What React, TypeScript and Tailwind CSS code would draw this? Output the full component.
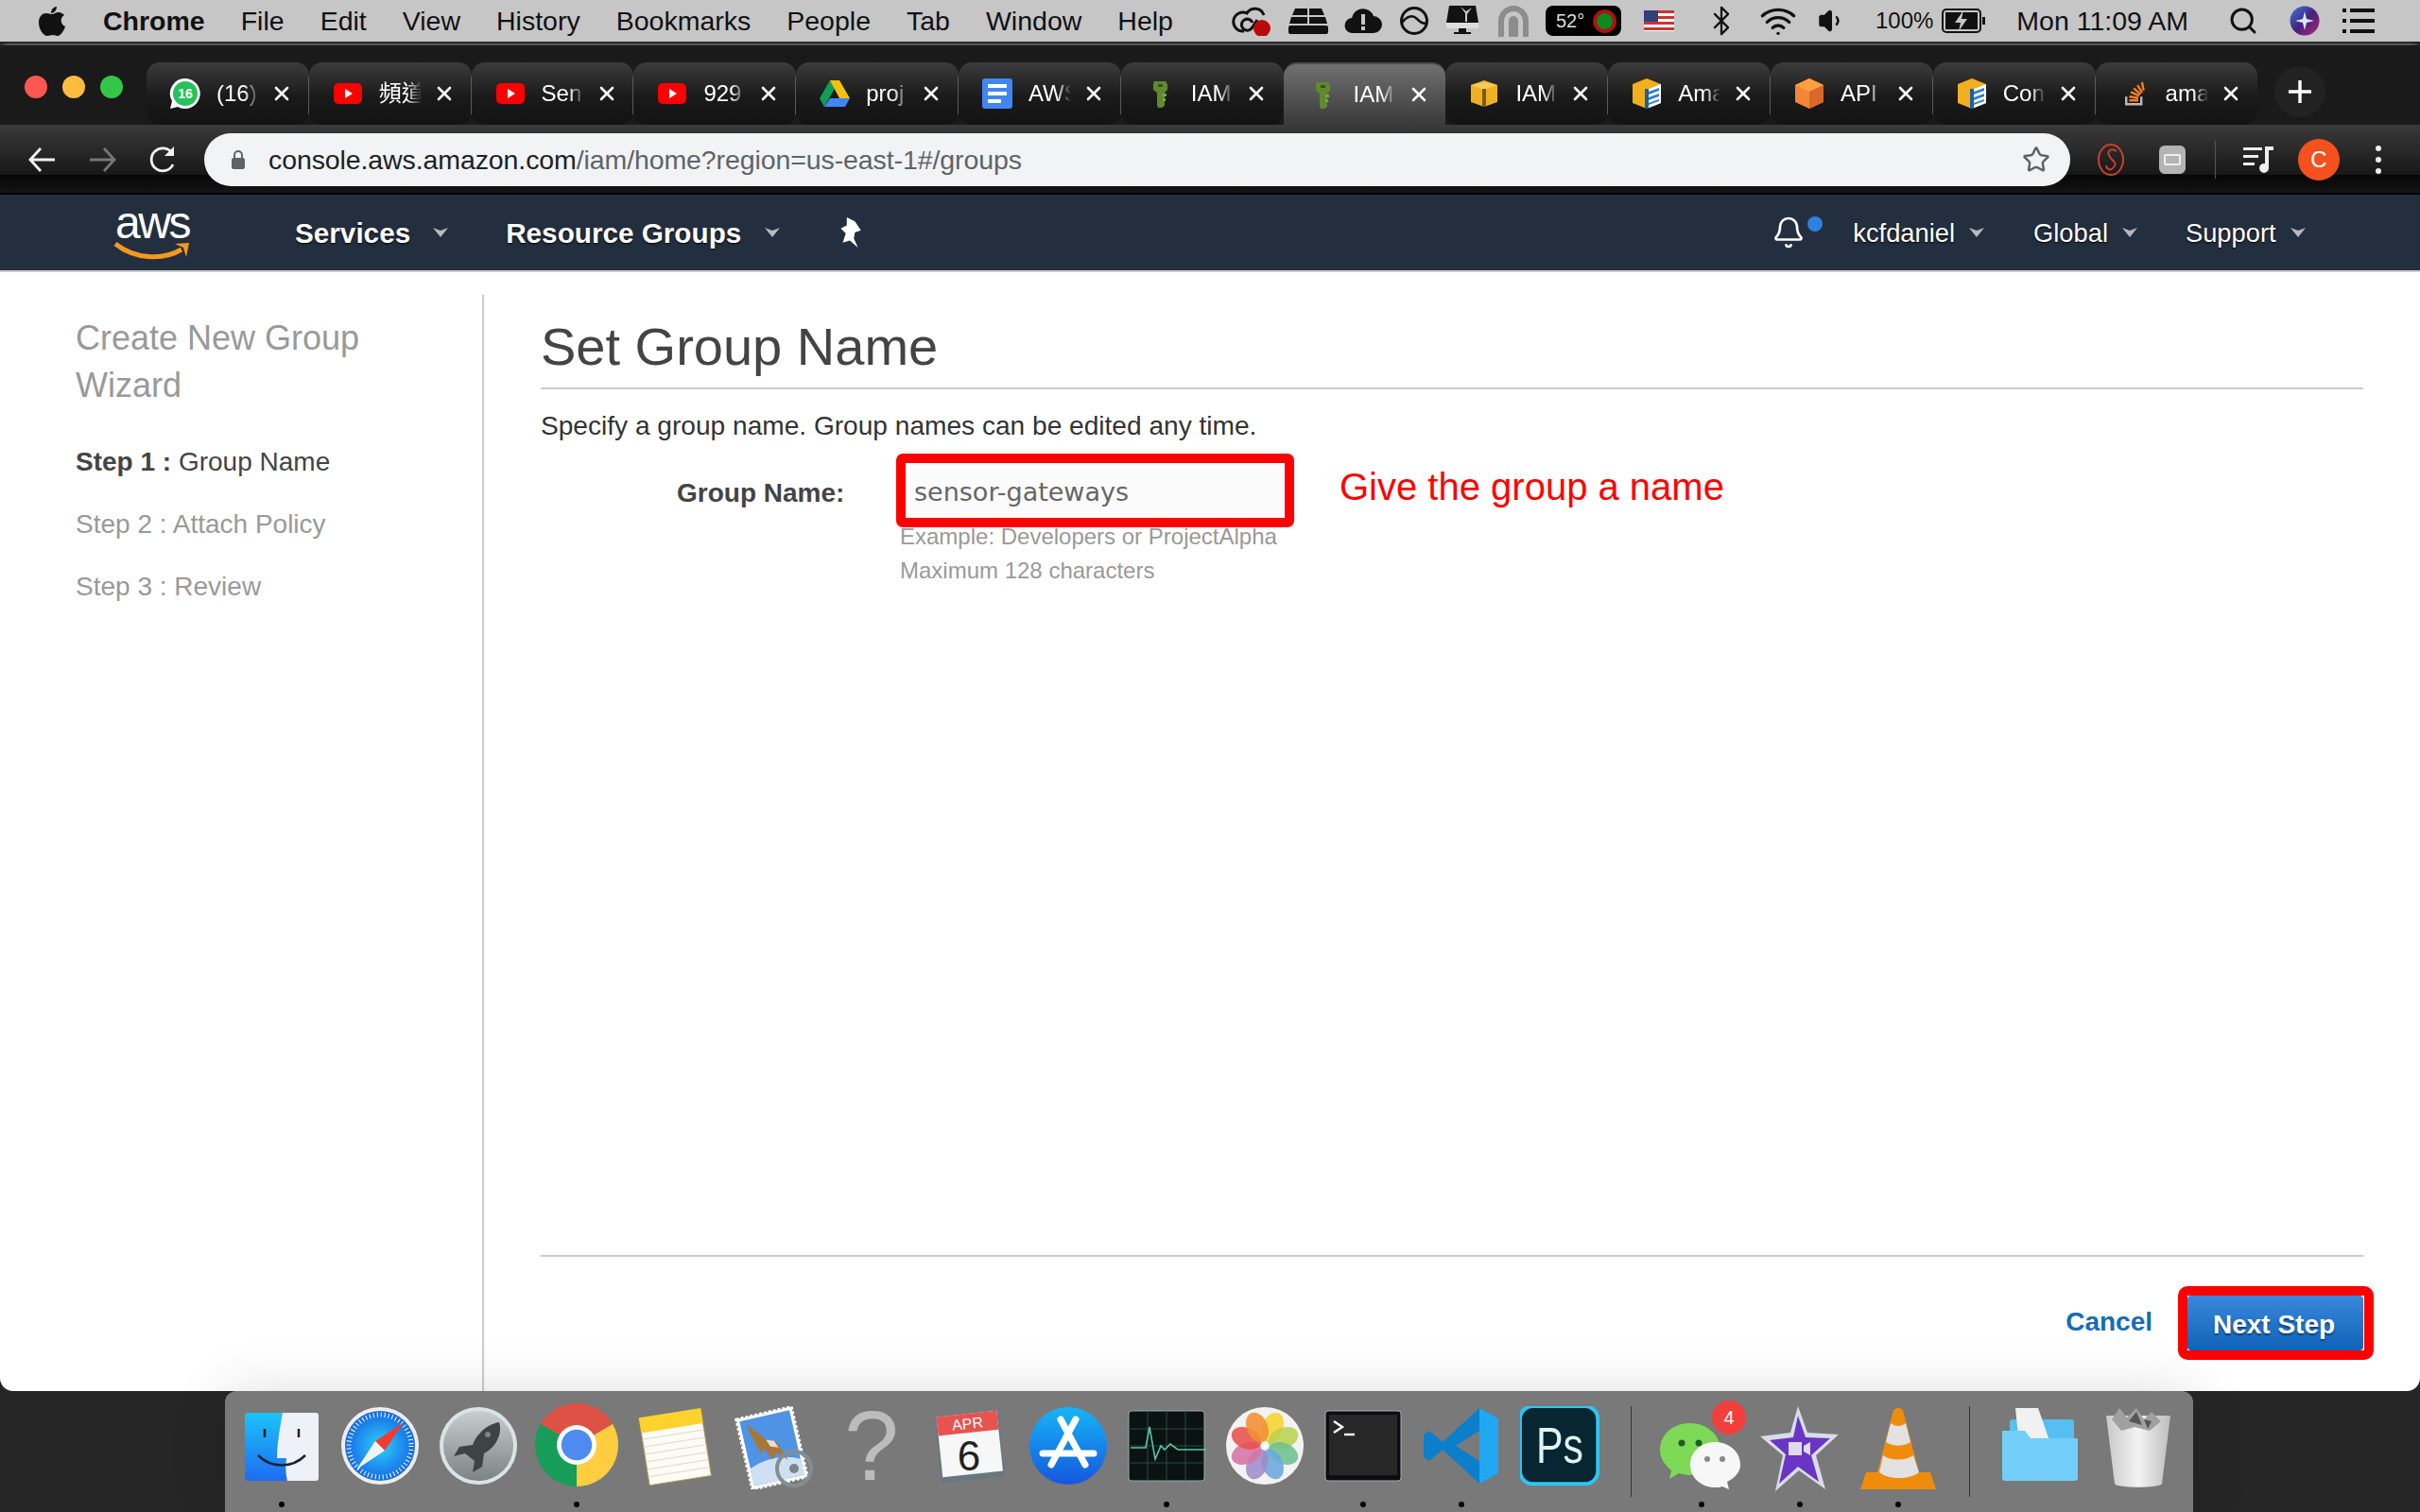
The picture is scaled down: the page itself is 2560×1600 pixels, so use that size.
import React from "react";
import { Bell, Bluetooth, Search, Star, Volume1, Wifi, X } from "lucide-react";

const menuItems = ["File", "Edit", "View", "History", "Bookmarks", "People", "Tab", "Window", "Help"];

const Caret = ({ className = "" }: { className?: string }) => (
  <svg width="18" height="12" viewBox="0 0 18 12" className={className}>
    <path d="M1 1l8 3 8-3-8 10z" fill="#b5bac0" />
  </svg>
);

const FaviconWhatsapp = () => (
  <svg width="34" height="34" viewBox="0 0 34 34">
    <path d="M17 1a16 16 0 0 0-14 24L1 33l8-2A16 16 0 1 0 17 1z" fill="#fff" />
    <circle cx="17" cy="17" r="13" fill="#25c15a" />
    <text x="17" y="22" textAnchor="middle" fontSize="14" fontWeight="700" fill="#fff">16</text>
  </svg>
);
const FaviconYoutube = () => (
  <svg width="30" height="22" viewBox="0 0 30 22">
    <rect width="30" height="22" rx="5" fill="#f00" />
    <path d="M12 6l8 5-8 5z" fill="#fff" />
  </svg>
);
const FaviconDrive = () => (
  <svg width="32" height="28" viewBox="0 0 32 28">
    <path d="M11 0h10L10 19 5 28 0 19z" fill="#0f9d58" />
    <path d="M11 0h10l11 19H21z" fill="#f4c20d" />
    <path d="M5 28l6-9h21l-5 9z" fill="#4285f4" />
  </svg>
);
const FaviconDocs = () => (
  <svg width="32" height="32" viewBox="0 0 32 32">
    <rect width="32" height="32" rx="3" fill="#4285f4" />
    <path d="M6 6h20v4H6zM6 14h20v4H6zM6 22h14v4H6z" fill="#fff" />
  </svg>
);
const FaviconKey = () => (
  <svg width="18" height="30" viewBox="0 0 18 30">
    <path d="M3 2h12l2 3v6l-3 3v14l-3 2H7l-1-3V14L2 11V5z" fill="#5f8a2e" />
    <rect x="7" y="5" width="5" height="3" fill="#37501c" />
    <path d="M12 15h4v3h-4zM12 20h3v3h-3z" fill="#7ea63d" />
  </svg>
);
const FaviconBox = () => (
  <svg width="28" height="28" viewBox="0 0 28 28">
    <path d="M0 5l14-5 14 5v18l-14 5-14-5z" fill="#efb024" />
    <path d="M0 5l14 5 14-5-14-3z" fill="#f7c95a" />
    <path d="M12 9h4v19h-4z" fill="#7a5a1c" />
  </svg>
);
const FaviconBlueBox = () => (
  <svg width="32" height="32" viewBox="0 0 32 32">
    <path d="M16 0l15 6v20l-15 6-15-6V6z" fill="#f2b01e" />
    <path d="M16 12l15-6v20l-15 6z" fill="#fff" />
    <path d="M18 14l11-4v3l-11 4zM18 20l11-4v3l-11 4zM18 26l11-4v2l-11 4z" fill="#2f7fd0" />
    <path d="M14 11h4v21h-4z" fill="#1f5f9f" />
  </svg>
);
const FaviconHex = () => (
  <svg width="32" height="32" viewBox="0 0 32 32">
    <path d="M16 0l15 7v18l-15 7-15-7V7z" fill="#f58536" />
    <path d="M16 0l15 7-15 7-15-7z" fill="#f9a03f" />
    <path d="M16 14l15-7v18l-15 7z" fill="#d9672a" />
  </svg>
);
const FaviconStack = () => (
  <svg width="24" height="32" viewBox="0 0 30 32">
    <path d="M4 20v10h20V20" fill="none" stroke="#bcbbbb" strokeWidth="3" />
    <path d="M8 25h12M8 20l12 2M10 14l11 5M14 9l9 8M19 5l6 10M25 1l2 11" stroke="#f48024" strokeWidth="3" fill="none" />
  </svg>
);

const tabs: { icon: React.ReactNode; title: string; active?: boolean }[] = [
  { icon: <FaviconWhatsapp />, title: "(16)" },
  { icon: <FaviconYoutube />, title: "頻道" },
  { icon: <FaviconYoutube />, title: "Sen" },
  { icon: <FaviconYoutube />, title: "929" },
  { icon: <FaviconDrive />, title: "proj" },
  { icon: <FaviconDocs />, title: "AWS" },
  { icon: <FaviconKey />, title: "IAM" },
  { icon: <FaviconKey />, title: "IAM", active: true },
  { icon: <FaviconBox />, title: "IAM" },
  { icon: <FaviconBlueBox />, title: "Ama" },
  { icon: <FaviconHex />, title: "API" },
  { icon: <FaviconBlueBox />, title: "Con" },
  { icon: <FaviconStack />, title: "ama" },
];

const ChromeTab = ({ icon, title, active, showDivider }: { icon: React.ReactNode; title: string; active?: boolean; showDivider: boolean }) => (
  <div
    className={`relative flex h-[66px] w-[171.8px] shrink-0 items-center rounded-t-[14px] ${
      active
        ? "rounded-b-none border-t-2 border-[#4c4c4c] bg-[linear-gradient(#707070,#3a3a3a)]"
        : "rounded-b-[14px] bg-[linear-gradient(#3c3c3c,#1a1a1a_55%,#131313)]"
    }`}
  >
    <div className="flex w-[74px] shrink-0 justify-center pl-[8px]">
      <span className="flex w-[34px] justify-center">{icon}</span>
    </div>
    <span className="w-[55px] whitespace-nowrap text-[24px] text-white [mask-image:linear-gradient(to_right,black_53%,transparent_82%)]">
      {title}
    </span>
    <X size={24} strokeWidth={2.6} className="ml-[2px] text-white" />
    {showDivider && <div className="absolute right-0 top-[15px] h-[40px] w-[1px] bg-[#5a5a5a]" />}
  </div>
);

const MenuBarRight = () => (
  <div className="ml-auto flex items-center text-[#111]">
    <svg width="42" height="32" viewBox="0 0 42 32">
      <path d="M13 27a10 10 0 1 1 3-19 10 10 0 0 1 18 2" fill="none" stroke="#111" strokeWidth="3" />
      <path d="M22 18a6 6 0 1 0-1 6l6-9" fill="none" stroke="#111" strokeWidth="3" />
      <circle cx="32" cy="24" r="9" fill="#b80a0a" />
    </svg>
    <svg width="42" height="28" viewBox="0 0 42 28" className="ml-[18px]">
      <path d="M7 1h13v7H4zM22 1h13l3 7H22zM3 10h17v7H1zM22 10h17l2 7H22z" fill="#111" />
      <rect y="19" width="42" height="9" rx="2" fill="#111" />
    </svg>
    <svg width="40" height="28" viewBox="0 0 40 28" className="ml-[17px]">
      <path d="M9 27a8 8 0 0 1-1-16 12 12 0 0 1 23-2 9 9 0 0 1 0 18z" fill="#111" />
      <path d="M18 7h4v11h-4zM18 20h4v4h-4z" fill="#c6c6c6" />
    </svg>
    <svg width="32" height="32" viewBox="0 0 32 32" className="ml-[18px]">
      <circle cx="16" cy="16" r="13.5" fill="none" stroke="#111" strokeWidth="3" />
      <path d="M3 18c6-8 12-8 16-4s7 6 10 4" fill="none" stroke="#111" strokeWidth="2.5" />
    </svg>
    <svg width="36" height="32" viewBox="0 0 36 32" className="ml-[17px]">
      <path d="M4 0h28l3 18H1z" fill="#111" />
      <path d="M16 1l6 5 6-4-5 7v8h-2V8z" fill="#c6c6c6" />
      <rect x="1" y="18" width="34" height="6" fill="#ddd" />
      <path d="M14 24h8v4h5v2H9v-2h5z" fill="#111" />
    </svg>
    <svg width="32" height="33" viewBox="0 0 32 33" className="ml-[20px]">
      <path d="M3 33V16a13 13 0 0 1 26 0v17" fill="none" stroke="#8d8d8d" strokeWidth="6" />
      <path d="M11 33V16a5 5 0 0 1 10 0v17z" fill="#8d8d8d" />
    </svg>
    <div className="ml-[18px] flex h-[32px] w-[80px] items-center justify-between rounded-[8px] bg-black pl-[11px] pr-[5px] text-[20px] text-[#ddd]">
      52°
      <span className="size-[25px] rounded-full border-[4px] border-[#b01010] bg-[#0c8a1d]" />
    </div>
    <div className="ml-[24px] h-[22px] w-[32px] bg-[repeating-linear-gradient(#c33_0,#c33_3px,#fff_3px,#fff_6px)]">
      <div className="h-[12px] w-[15px] bg-[#33407c]" />
    </div>
    <Bluetooth size={34} strokeWidth={1.6} className="ml-[33px]" />
    <Wifi size={40} strokeWidth={2} className="ml-[23px]" />
    <Volume1 size={30} fill="#111" className="ml-[22px]" />
    <span className="ml-[31px] text-[24px]">100%</span>
    <svg width="46" height="26" viewBox="0 0 46 26" className="ml-[9px]">
      <rect x="1" y="1" width="40" height="24" rx="4" fill="none" stroke="#111" strokeWidth="2" />
      <rect x="4" y="4" width="34" height="18" fill="#111" />
      <path d="M23 2l-9 13h6l-2 9 9-13h-6z" fill="#c6c6c6" />
      <rect x="43" y="9" width="3" height="8" fill="#111" />
    </svg>
    <span className="ml-[33px] text-[28.5px]">Mon 11:09 AM</span>
    <Search size={32} strokeWidth={2.2} className="ml-[42px]" />
    <svg width="32" height="32" viewBox="0 0 32 32" className="ml-[33px]">
      <defs>
        <linearGradient id="siri" x1="0" y1="0" x2="1" y2="1">
          <stop offset="0" stopColor="#3c7fe0" />
          <stop offset="0.5" stopColor="#45217c" />
          <stop offset="1" stopColor="#b02a70" />
        </linearGradient>
      </defs>
      <circle cx="16" cy="16" r="15.5" fill="url(#siri)" />
      <path d="M16 6l2 8 8 2-8 2-2 8-2-8-8-2 8-2z" fill="#d7e8ff" />
    </svg>
    <svg width="36" height="26" viewBox="0 0 36 26" className="ml-[24px] mr-[46px]">
      <path d="M0 0h4v4H0zM8 0h26v4H8zM0 11h4v4H0zM8 11h26v4H8zM0 22h4v4H0zM8 22h26v4H8z" fill="#111" />
    </svg>
  </div>
);

const Toolbar = () => (
  <div className="flex h-[74px] items-center bg-[linear-gradient(#3a3a3a,#181818_71%,#060606_72%,#161616)]">
    <svg width="30" height="28" viewBox="0 0 30 28" className="ml-[30px]">
      <path d="M13 2L2 14l11 12M2 14h26" fill="none" stroke="#f2f2f2" strokeWidth="2.8" />
    </svg>
    <svg width="30" height="28" viewBox="0 0 30 28" className="ml-[33px]">
      <path d="M17 2l11 12-11 12M28 14H2" fill="none" stroke="#777" strokeWidth="2.8" />
    </svg>
    <svg width="30" height="30" viewBox="0 0 30 30" className="ml-[35px]">
      <path d="M25 20a12 12 0 1 1-1-12" fill="none" stroke="#f2f2f2" strokeWidth="2.8" />
      <path d="M26 1v10H16z" fill="#f2f2f2" />
    </svg>
    <div className="ml-[28px] flex h-[56px] w-[1974px] items-center rounded-full bg-[#f1f3f4] pl-[29px] pr-[21px]">
      <svg width="14" height="20" viewBox="0 0 14 20">
        <path d="M3 8V5a4 4 0 0 1 8 0v3" fill="none" stroke="#5f6368" strokeWidth="2" />
        <rect y="8" width="14" height="12" rx="2" fill="#5f6368" />
      </svg>
      <span className="ml-[25px] text-[28.5px] tracking-[-0.1px] text-[#5f6368]">
        <span className="text-[#202124]">console.aws.amazon.com</span>/iam/home?region=us-east-1#/groups
      </span>
      <Star size={30} strokeWidth={2} className="ml-auto text-[#5f6368]" />
    </div>
    <svg width="28" height="34" viewBox="0 0 28 34" className="ml-[29px]">
      <ellipse cx="14" cy="17" rx="13" ry="16" fill="none" stroke="#c9402a" strokeWidth="2" />
      <path d="M20 8c-6-4-11 0-7 6s8 6 4 11-8 1-8-2" fill="none" stroke="#c9402a" strokeWidth="2" />
    </svg>
    <div className="ml-[37px] flex h-[30px] w-[28px] items-center justify-center rounded-[6px] bg-[#b4b4b4]">
      <span className="h-[12px] w-[18px] rounded-[2px] border-2 border-[#eee]" />
    </div>
    <div className="ml-[31px] h-[40px] w-[1px] bg-[#555]" />
    <svg width="34" height="30" viewBox="0 0 34 30" className="ml-[28px]">
      <path d="M1 2h20v3H1zM1 10h16v3H1zM1 18h12v3H1z" fill="#eee" />
      <path d="M24 1h9v4h-5v19a5 5 0 1 1-4-5z" fill="#eee" />
    </svg>
    <div className="ml-[25px] flex size-[44px] items-center justify-center rounded-full bg-[#f4511e] text-[24px] text-white">C</div>
    <div className="ml-[38px] flex flex-col gap-[6px]">
      <span className="size-[6px] rounded-full bg-[#eee]" />
      <span className="size-[6px] rounded-full bg-[#eee]" />
      <span className="size-[6px] rounded-full bg-[#eee]" />
    </div>
  </div>
);

const AwsNav = () => (
  <div className="flex h-[80px] items-center bg-[#232f3e] text-white">
    <div className="ml-[119px] flex w-[84px] flex-col items-center">
      <span className="h-[38px] text-[48px] leading-[38px] tracking-[-2.5px]">aws</span>
      <svg width="82" height="20" viewBox="0 0 82 20">
        <path d="M2 3c20 16 50 18 70 6" fill="none" stroke="#f7981d" strokeWidth="5" />
        <path d="M65 3l15-1-3 15-3-10z" fill="#f7981d" />
      </svg>
    </div>
    <span className="ml-[109px] pt-[2px] text-[29.7px] font-bold [text-shadow:0_1px_2px_#000]">Services</span>
    <Caret className="ml-[23px]" />
    <span className="ml-[60px] pt-[2px] text-[29.7px] font-bold [text-shadow:0_1px_2px_#000]">Resource Groups</span>
    <Caret className="ml-[24px]" />
    <svg width="26" height="32" viewBox="0 0 24 30" className="ml-[60px]">
      <path d="M9 0l8 4 6 9-6 2-1 6 4 9-8-7-7 2 3-9-5-5 6-3z" fill="#fff" />
    </svg>
    <div className="relative ml-[962px] flex">
      <Bell size={36} strokeWidth={1.8} />
      <span className="absolute -right-[18px] top-[1px] size-[16px] rounded-full bg-[#2f80df]" />
    </div>
    <span className="ml-[50px] pt-[2px] text-[27.3px] [text-shadow:0_1px_2px_#000]">kcfdaniel</span>
    <Caret className="ml-[14px]" />
    <span className="ml-[51px] pt-[2px] text-[27.3px] [text-shadow:0_1px_2px_#000]">Global</span>
    <Caret className="ml-[14px]" />
    <span className="ml-[50px] pt-[2px] text-[27.3px] [text-shadow:0_1px_2px_#000]">Support</span>
    <Caret className="ml-[14px]" />
  </div>
);

const WizardSidebar = () => (
  <aside className="w-[512px] shrink-0 border-r-2 border-[#ccc] pl-[80px] pt-[21px] text-[#999]">
    <h2 className="w-[340px] text-[36px] leading-[50px]">Create New Group Wizard</h2>
    <ul className="mt-[36px] flex flex-col gap-[26px] text-[28px] leading-[40px]">
      <li className="text-[#444]">
        <b>Step 1 :</b> Group Name
      </li>
      <li>Step 2 : Attach Policy</li>
      <li>Step 3 : Review</li>
    </ul>
  </aside>
);

const GroupForm = () => (
  <main className="flex min-w-0 flex-1 flex-col pl-[60px] pr-[60px] pt-[22px]">
    <h1 className="border-b-2 border-[#ccc] pb-[10px] text-[56px] leading-[66px] text-[#444]">Set Group Name</h1>
    <p className="mt-[19px] text-[28.1px] leading-[40px] text-[#333]">Specify a group name. Group names can be edited any time.</p>
    <div className="ml-[144px] mt-[9px] flex items-start">
      <label className="w-[176px] whitespace-nowrap pt-[3px] text-[28px] font-bold leading-[78px] text-[#444]">Group Name:</label>
      <div className="ml-[56px] w-[421px]">
        <div className="flex h-[78px] items-center rounded-[7px] border-[10px] border-[#f00] bg-[#fbfbfb] pl-[9px] pt-[4px] font-['DejaVu_Sans',sans-serif] text-[27px] text-[#666]">
          sensor-gateways
        </div>
        <div className="-mt-[8px] whitespace-nowrap pl-[4px] text-[24px] leading-[36px] text-[#999]">
          <p>Example: Developers or ProjectAlpha</p>
          <p>Maximum 128 characters</p>
        </div>
      </div>
      <span className="ml-[48px] mt-[11px] text-[40px] leading-[48px] text-[#f00]">Give the group a name</span>
    </div>
    <div className="mt-auto flex items-center justify-end border-t-2 border-[#ccc] pb-[33px] pt-[31px]">
      <a className="pb-[3px] text-[28px] font-bold text-[#146eb4]">Cancel</a>
      <div className="-mr-[11px] ml-[27px] h-[78px] w-[207px] rounded-[10px] border-[10px] border-[#f00] bg-white">
        <button className="h-[58px] w-[186px] rounded-[4px] bg-[linear-gradient(#3a88de,#0f63b8)] pr-[3px] pt-[4px] text-[28px] font-bold text-white [text-shadow:0_2px_2px_#0a3d73]">
          Next Step
        </button>
      </div>
    </div>
  </main>
);

const Finder = () => (
  <svg width="84" height="84" viewBox="0 0 84 84">
    <defs>
      <linearGradient id="finderBlue" x1="0" y1="0" x2="0" y2="1">
        <stop offset="0" stopColor="#1bc3fb" />
        <stop offset="1" stopColor="#1e6cf0" />
      </linearGradient>
    </defs>
    <rect x="3" y="7" width="78" height="72" rx="3" fill="url(#finderBlue)" />
    <path d="M43 7h35a3 3 0 0 1 3 3v66a3 3 0 0 1-3 3H48c-2-8-2-16-1-24H37c0-14 3-32 6-48z" fill="#eef2f8" />
    <path d="M24 24v9M60 24v9" stroke="#222" strokeWidth="2.5" />
    <path d="M17 52c14 14 36 14 50 0" fill="none" stroke="#15233d" strokeWidth="2.5" />
  </svg>
);
const Safari = () => (
  <svg width="84" height="84" viewBox="0 0 84 84">
    <defs>
      <radialGradient id="safariBlue">
        <stop offset="0" stopColor="#2ed0fb" />
        <stop offset="1" stopColor="#1569e6" />
      </radialGradient>
    </defs>
    <circle cx="42" cy="42" r="41" fill="#eee" />
    <circle cx="42" cy="42" r="37" fill="url(#safariBlue)" />
    <circle cx="42" cy="42" r="33" fill="none" stroke="#fff" strokeWidth="5" strokeDasharray="1 3" />
    <path d="M67 17L47 47 37 37z" fill="#f23b30" />
    <path d="M17 67l20-30 10 10z" fill="#f2f2f2" />
  </svg>
);
const Launchpad = () => (
  <svg width="84" height="84" viewBox="0 0 84 84">
    <defs>
      <linearGradient id="launchGrey" x1="0" y1="0" x2="0" y2="1">
        <stop offset="0" stopColor="#c8ced0" />
        <stop offset="1" stopColor="#7d8284" />
      </linearGradient>
    </defs>
    <circle cx="42" cy="42" r="41" fill="#d9e4e6" />
    <circle cx="42" cy="42" r="37" fill="url(#launchGrey)" />
    <path d="M64 17c-12 2-24 12-28 24l-14 2-6 10 12-3 10 8-2 12 10-6 2-14c12-6 20-20 16-33z" fill="#3e4345" />
    <circle cx="52" cy="30" r="3" fill="#7d8284" />
  </svg>
);
const ChromeLogo = () => (
  <svg width="88" height="88" viewBox="0 0 84 84" className="-mt-[3px]">
    <path d="M42 42L5.6 21A42 42 0 0 1 78.4 21Z" fill="#de5145" />
    <path d="M42 42L78.4 21A42 42 0 0 1 42 84Z" fill="#ffcd40" />
    <path d="M42 42L42 84A42 42 0 0 1 5.6 21Z" fill="#169e58" />
    <circle cx="42" cy="42" r="20" fill="#fff" />
    <circle cx="42" cy="42" r="15.5" fill="#4e8bf1" />
  </svg>
);
const Notes = () => (
  <svg width="84" height="84" viewBox="0 0 84 84">
    <g transform="rotate(-9 42 42)">
      <rect x="9" y="7" width="66" height="72" fill="#fcfcf4" stroke="#b49a4c" strokeWidth="1" />
      <rect x="9" y="7" width="66" height="16" fill="#fdd22f" />
      <path d="M9 30h66M9 38h66M9 46h66M9 54h66M9 62h66M9 70h66" stroke="#d8d8d8" strokeWidth="1" />
    </g>
  </svg>
);
const Mail = () => (
  <svg width="84" height="88" viewBox="0 0 84 88">
    <g transform="rotate(-13 42 42)">
      <rect x="10" y="6" width="60" height="76" fill="#fff" stroke="#fff" strokeWidth="3" strokeDasharray="3 2" />
      <rect x="13" y="9" width="54" height="70" fill="#4f94e4" />
      <path d="M13 60c20-8 40-6 54 2v17H13z" fill="#cfe0f2" />
      <path d="M20 14c6 6 10 12 16 20l10 4 8 22-10-10-6 6-6-14-4 6c-4-14-8-24-8-34z" fill="#a7763a" />
      <path d="M36 34l8 3 3 8-8-3z" fill="#e7ddc8" />
    </g>
    <circle cx="64" cy="66" r="18" fill="none" stroke="#858d94" strokeWidth="4" />
    <circle cx="64" cy="66" r="5" fill="#7c848b" />
  </svg>
);
const Help = () => (
  <div className="flex h-[84px] w-[84px] items-center justify-center text-[104px] leading-none text-[#bcbcbc]">?</div>
);
const Calendar = () => (
  <svg width="84" height="84" viewBox="0 0 84 84">
    <g transform="rotate(-6 42 42)">
      <rect x="8" y="12" width="68" height="66" fill="#677881" />
      <rect x="10" y="8" width="64" height="64" fill="#f7f7f7" />
      <path d="M10 8h64v20H10z" fill="#e85350" />
      <text x="42" y="24" textAnchor="middle" fontSize="16" fill="#fff">APR</text>
    </g>
    <text x="41" y="68" textAnchor="middle" fontSize="44" fill="#222">6</text>
  </svg>
);
const AppStore = () => (
  <svg width="84" height="84" viewBox="0 0 84 84">
    <defs>
      <linearGradient id="appBlue" x1="0" y1="0" x2="0" y2="1">
        <stop offset="0" stopColor="#16b5f5" />
        <stop offset="1" stopColor="#1457df" />
      </linearGradient>
    </defs>
    <circle cx="42" cy="42" r="41" fill="url(#appBlue)" />
    <path d="M50 14L24 62M34 14l26 48M15 50h54" stroke="#fff" strokeWidth="7" strokeLinecap="round" fill="none" />
  </svg>
);
const ActivityMonitor = () => (
  <svg width="84" height="84" viewBox="0 0 84 84">
    <rect x="2" y="5" width="80" height="74" rx="3" fill="#0b1311" stroke="#9aa" strokeWidth="1" />
    <path d="M2 24h80M2 42h80M2 60h80M22 5v74M42 5v74M62 5v74" stroke="#2b4a42" strokeWidth="1" />
    <path d="M4 44h16l4-22 6 34 6-14 4 4 6-6 8 6h32" fill="none" stroke="#58c8a5" strokeWidth="1.6" />
  </svg>
);
const Photos = () => (
  <svg width="84" height="84" viewBox="0 0 84 84">
    <circle cx="42" cy="42" r="41" fill="#f3f3f3" />
    {["#f6d32e", "#b9d24e", "#6dc08f", "#6aa9dd", "#9d8ccb", "#d673a4", "#e9504c", "#f18f33"].map((color, i) => (
      <ellipse key={color} cx="42" cy="21" rx="11" ry="16.5" fill={color} opacity="0.88" transform={`rotate(${22.5 + i * 45} 42 42)`} />
    ))}
    <circle cx="42" cy="42" r="2" fill="#fff" />
  </svg>
);
const Terminal = () => (
  <svg width="84" height="84" viewBox="0 0 84 84">
    <rect x="2" y="5" width="80" height="74" rx="3" fill="#0d0d0d" stroke="#aab" strokeWidth="1" />
    <rect x="6" y="9" width="72" height="64" fill="#272727" />
    <path d="M11 16l9 6-9 6" fill="none" stroke="#fff" strokeWidth="2.4" />
    <path d="M22 30h11" stroke="#fff" strokeWidth="2.4" />
  </svg>
);
const VSCode = () => (
  <svg width="84" height="84" viewBox="0 0 84 84">
    <path d="M61 2L81 13v58L61 82 22 46 8 58 2 54V30l6-4 14 12z" fill="#0b7fcc" />
    <path d="M61 2l20 11v58L61 82z" fill="#20a8f3" />
    <path d="M61 26v32L36 42z" fill="#7a7a7a" />
  </svg>
);
const Photoshop = () => (
  <svg width="84" height="84" viewBox="0 0 84 84">
    <rect x="2" y="1" width="84" height="84" rx="14" fill="#072631" stroke="#2dc7f6" strokeWidth="4" transform="translate(-2 -1) scale(0.98)" />
    <text x="42" y="60" textAnchor="middle" fontSize="54" textLength="50" lengthAdjust="spacingAndGlyphs" fill="#dff4fb">Ps</text>
  </svg>
);
const WeChat = () => (
  <div className="relative h-[84px] w-[88px]">
    <svg width="88" height="88" viewBox="0 0 88 88" className="absolute left-0 top-0">
      <path d="M32 18c-18 0-32 12-32 28 0 9 5 16 12 22l-2 9 10-6c4 1 8 2 12 2 18 0 32-12 32-27S50 18 32 18z" fill="#7ed957" />
      <circle cx="23" cy="39" r="3.5" fill="#1d5f26" />
      <circle cx="41" cy="39" r="3.5" fill="#1d5f26" />
      <path d="M58 38c-14 0-26 10-26 24s12 24 26 24c3 0 6 0 8-1l7 3-2-8c8-4 14-10 14-18 0-14-12-24-27-24z" fill="#f7f7f7" />
      <circle cx="50" cy="56" r="3" fill="#888" />
      <circle cx="66" cy="56" r="3" fill="#888" />
    </svg>
    <span className="absolute right-[-3px] top-[-6px] flex h-[36px] w-[36px] items-center justify-center rounded-full bg-[#f33f3c] text-[20px] text-white">4</span>
  </div>
);
const IMovie = () => (
  <svg width="84" height="92" viewBox="0 0 84 92">
    <path d="M40 0l10 28 33 2-24 22 10 36-28-20-25 22 8-38L0 32l32-4z" fill="#d8dde8" />
    <path d="M40 10l8 23 26 1-20 18 8 28-22-16-20 18 7-31L10 36l25-3z" fill="#6a35c4" />
    <path d="M30 38h14v14H30zM46 42l7-4v14l-7-4z" fill="#dde" />
  </svg>
);
const Vlc = () => (
  <svg width="84" height="90" viewBox="0 0 84 90">
    <path d="M42 2c4 0 5 2 6 6l16 62h12l6 18H2l6-18h12L36 8c1-4 2-6 6-6z" fill="#f08c0c" />
    <path d="M34 18c5 4 11 4 16 0l5 20c-8 5-18 5-26 0zM26 52c8 6 24 6 32 0l6 18c-10 8-32 8-42 0z" fill="#e2e2e2" />
  </svg>
);
const Folder = () => (
  <svg width="84" height="84" viewBox="0 0 84 84">
    <rect x="10" y="14" width="68" height="30" rx="3" fill="#55bff2" />
    <path d="M16 2h24l14 40H20z" fill="#f1f1f1" />
    <path d="M2 26h24l6 8h50v42a3 3 0 0 1-3 3H5a3 3 0 0 1-3-3z" fill="#73cef9" />
  </svg>
);
const Trash = () => (
  <svg width="72" height="88" viewBox="0 0 72 88">
    <defs>
      <linearGradient id="trashGlass" x1="0" y1="0" x2="1" y2="0">
        <stop offset="0" stopColor="#c8c8c8" />
        <stop offset="0.5" stopColor="#f3f3f3" />
        <stop offset="1" stopColor="#bdbdbd" />
      </linearGradient>
    </defs>
    <path d="M2 10h68l-9 72c-2 5-48 5-50 0z" fill="url(#trashGlass)" />
    <path d="M8 14l8-12 8 10 10-10 8 12 8-8 10 10-12 10-16-4-14 4z" fill="#a0a0a0" />
    <path d="M26 16l8-10 6 14zM42 14l8 2-4 8z" fill="#555" />
  </svg>
);

type DockEntry = { key: string; icon: React.ReactNode; running?: boolean };

const dockItems: DockEntry[] = [
  { key: "finder", icon: <Finder />, running: true },
  { key: "safari", icon: <Safari /> },
  { key: "launchpad", icon: <Launchpad /> },
  { key: "chrome", icon: <ChromeLogo />, running: true },
  { key: "notes", icon: <Notes /> },
  { key: "mail", icon: <Mail /> },
  { key: "help", icon: <Help /> },
  { key: "calendar", icon: <Calendar /> },
  { key: "appstore", icon: <AppStore /> },
  { key: "activity", icon: <ActivityMonitor />, running: true },
  { key: "photos", icon: <Photos /> },
  { key: "terminal", icon: <Terminal />, running: true },
  { key: "vscode", icon: <VSCode />, running: true },
  { key: "photoshop", icon: <Photoshop /> },
];
const dockApps: DockEntry[] = [
  { key: "wechat", icon: <WeChat />, running: true },
  { key: "imovie", icon: <IMovie />, running: true },
  { key: "vlc", icon: <Vlc />, running: true },
];
const dockFiles: DockEntry[] = [
  { key: "folder", icon: <Folder /> },
  { key: "trash", icon: <Trash /> },
];

const DockItem = ({ icon, running }: { icon: React.ReactNode; running?: boolean }) => (
  <div className="relative flex h-full w-[104px] shrink-0 justify-center pt-[16px]">
    {icon}
    {running && <span className="absolute bottom-[5px] size-[6px] rounded-full bg-black" />}
  </div>
);

const DockDivider = () => (
  <div className="flex w-[46px] shrink-0 justify-center pt-[16px]">
    <div className="h-[96px] w-[1px] bg-[#333]" />
  </div>
);

const Dock = () => (
  <div className="relative z-10 ml-[238px] flex h-[128px] w-[2082px] rounded-t-[12px] bg-[#797979] pl-[8px] shadow-[0_0_60px_rgba(0,0,0,0.13)]">
    {dockItems.map((item) => (
      <DockItem key={item.key} icon={item.icon} running={item.running} />
    ))}
    <DockDivider />
    {dockApps.map((item) => (
      <DockItem key={item.key} icon={item.icon} running={item.running} />
    ))}
    <DockDivider />
    {dockFiles.map((item) => (
      <DockItem key={item.key} icon={item.icon} running={item.running} />
    ))}
  </div>
);

export default function App() {
  return (
    <div className="flex h-[1600px] w-[2560px] flex-col overflow-hidden bg-[#262626] font-['Liberation_Sans','Noto_Sans_CJK_TC',sans-serif]">
      <header className="flex h-[44px] shrink-0 items-center bg-[#c6c6c6] text-[28.5px] text-[#111]">
        <svg width="28" height="32" viewBox="0 0 28 32" className="ml-[41px]">
          <path d="M19 1c0 4-3 7-6 7 0-4 3-7 6-7zM14 9c2 0 4-2 7-2 3 0 5 2 6 3-5 3-4 10 1 12-1 4-5 10-8 10-2 0-3-1-5-1s-4 1-6 1C5 32 0 25 0 18 0 11 4 8 8 8c2 0 4 1 6 1z" fill="#111" />
        </svg>
        <span className="ml-[40px] font-bold">Chrome</span>
        <div className="ml-[38px] flex gap-[38px]">
          {menuItems.map((item) => (
            <span key={item}>{item}</span>
          ))}
        </div>
        <MenuBarRight />
      </header>

      <div className="h-[160px] shrink-0 overflow-hidden rounded-t-[8px] border-t-[2px] border-[#2a2a2a] bg-[#1a1a1a]">
        <div className="h-[2px] bg-[#555]" />
        <div className="flex h-[84px] items-end">
          <div className="ml-[26px] mr-[26px] mb-[28px] flex gap-[16px]">
            <span className="size-[24px] rounded-full bg-[#fc5753]" />
            <span className="size-[24px] rounded-full bg-[#fdbc40]" />
            <span className="size-[24px] rounded-full bg-[#33c748]" />
          </div>
          <div className="-ml-[1px] flex">
            {tabs.map((tab, i) => (
              <ChromeTab
                key={i}
                icon={tab.icon}
                title={tab.title}
                active={tab.active}
                showDivider={!tab.active && !tabs[i + 1]?.active && i < tabs.length - 1}
              />
            ))}
          </div>
          <div className="mb-[8px] ml-[18px] flex size-[54px] items-center justify-center rounded-full bg-[#222] text-white">
            <svg width="26" height="26" viewBox="0 0 26 26">
              <path d="M13 1v24M1 13h24" stroke="#fff" strokeWidth="3.4" />
            </svg>
          </div>
        </div>
        <Toolbar />
      </div>

      <div className="h-[2px] shrink-0 bg-black" />
      <AwsNav />
      <div className="h-[2px] shrink-0 bg-[#ccc]" />

      <div className="flex h-[1184px] shrink-0 rounded-b-[14px] bg-white pt-[24px]">
        <WizardSidebar />
        <GroupForm />
      </div>

      <Dock />
    </div>
  );
}
